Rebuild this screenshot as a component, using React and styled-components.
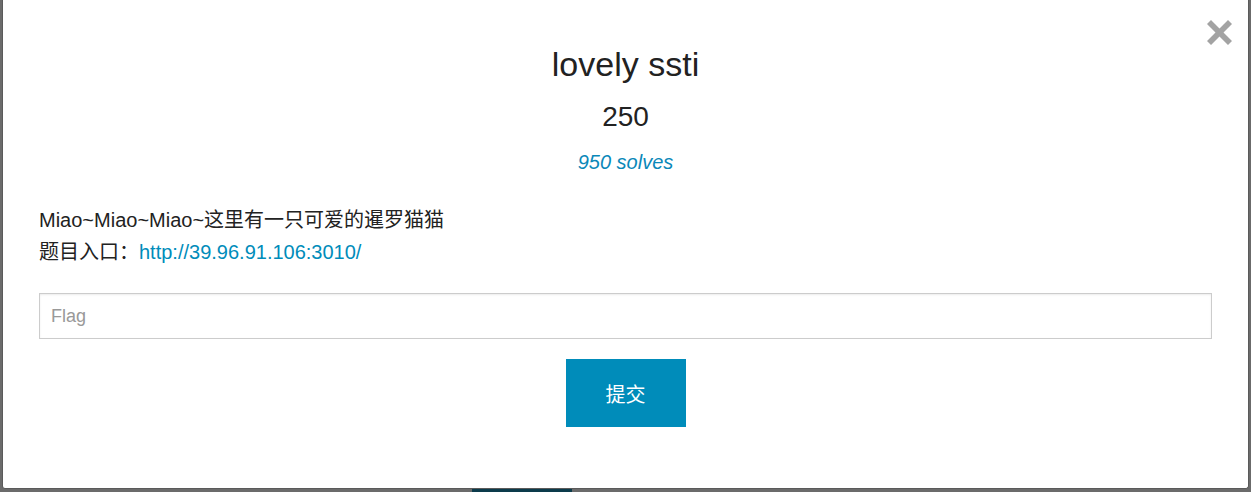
import styled, { createGlobalStyle } from 'styled-components';

const GlobalStyle = createGlobalStyle`
  html, body {
    margin: 0;
    padding: 0;
    background: #6b6b6b;
    font-family: "Liberation Sans", "Noto Sans CJK SC", sans-serif;
    overflow: hidden;
  }
`;

const Backdrop = styled.div`
  width: 1251px;
  height: 492px;
  display: flex;
  flex-direction: column;
`;

const Modal = styled.div`
  position: relative;
  height: 489px;
  box-sizing: border-box;
  margin: 0 2px;
  background: #fff;
  border: 1px solid #5a5a5a;
  border-top: none;
  border-radius: 0 0 3px 3px;
  padding: 44px 36px 0;
  display: flex;
  flex-direction: column;
  align-items: stretch;
`;

const Under = styled.div`
  flex: 1;
  display: flex;
  padding-left: 472px;
`;

const UnderButton = styled.div`
  width: 100px;
  background: #0c3b4b;
`;

const Close = styled.button`
  position: absolute;
  top: 20px;
  right: 16px;
  width: 25px;
  height: 25px;
  padding: 0;
  border: 0;
  background: none;
  cursor: pointer;
  svg {
    display: block;
  }
`;

const Title = styled.h3`
  margin: 0;
  font-size: 34px;
  font-weight: normal;
  line-height: 40px;
  color: #222;
  text-align: center;
`;

const Points = styled.h4`
  margin: 13px 0 0;
  font-size: 28px;
  font-weight: normal;
  line-height: 40px;
  color: #222;
  text-align: center;
`;

const Solves = styled.p`
  margin: 10px 0 0;
  font-size: 20px;
  font-style: italic;
  line-height: 30px;
  color: #0a88b9;
  text-align: center;
`;

const Description = styled.div`
  margin-top: 27px;
  font-size: 20px;
  line-height: 32px;
  color: #222;
`;

const Link = styled.a`
  color: #008cba;
  text-decoration: none;
`;

const Form = styled.form`
  margin-top: 25px;
  display: flex;
  flex-direction: column;
  align-items: center;
  gap: 20px;
`;

const FlagInput = styled.input`
  width: 100%;
  height: 46px;
  box-sizing: border-box;
  padding: 0 11px;
  border: 1px solid #ccc;
  box-shadow: inset 0 1px 2px rgba(0, 0, 0, 0.08);
  font-family: inherit;
  font-size: 18px;
  color: #222;
  outline: none;
  &::placeholder {
    color: #999;
  }
`;

const Submit = styled.button`
  width: 120px;
  height: 68px;
  border: 0;
  background: #008cba;
  color: #fff;
  font-family: inherit;
  font-size: 20px;
  cursor: pointer;
`;

const CloseIcon = () => (
  <svg width="25" height="25" viewBox="0 0 25 25">
    <polygon
      fill="#a3a3a3"
      points="4,0 12.5,8.5 21,0 25,4 16.5,12.5 25,21 21,25 12.5,16.5 4,25 0,21 8.5,12.5 0,4"
    />
  </svg>
);

export default function App() {
  return (
    <>
      <GlobalStyle />
      <Backdrop>
        <Modal>
          <Close aria-label="close">
            <CloseIcon />
          </Close>
          <Title>lovely ssti</Title>
          <Points>250</Points>
          <Solves>950 solves</Solves>
          <Description>
            <div>Miao~Miao~Miao~这里有一只可爱的暹罗猫猫</div>
            <div>
              题目入口：<Link href="#">http://39.96.91.106:3010/</Link>
            </div>
          </Description>
          <Form onSubmit={(e) => e.preventDefault()}>
            <FlagInput placeholder="Flag" />
            <Submit type="submit">提交</Submit>
          </Form>
        </Modal>
        <Under>
          <UnderButton />
        </Under>
      </Backdrop>
    </>
  );
}
